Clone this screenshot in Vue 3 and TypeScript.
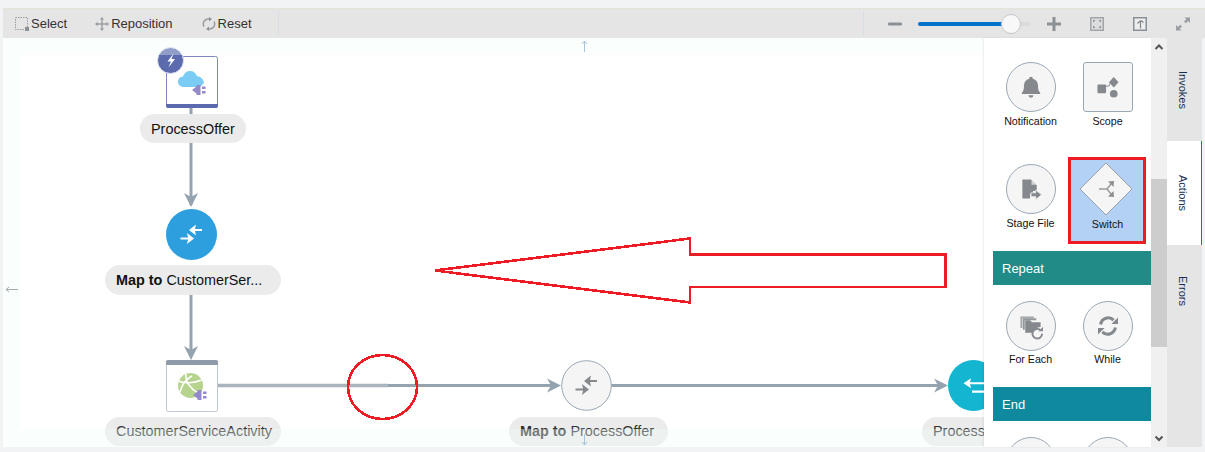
<template>
  <div class="page">
    <svg class="defs" aria-hidden="true">
      <symbol id="i-bell" viewBox="0 0 50 50">
        <g transform="translate(25 25) scale(.86) translate(-25 -26)" fill="#85898d">
          <path d="M25 13.5a2.2 2.2 0 0 1 2.2 2.4c4.2 1 6.3 4.2 6.3 8.6 0 3.8 .6 6.8 2.6 8.5v1.5H13.9V33c2-1.7 2.6-4.7 2.6-8.5 0-4.4 2.1-7.6 6.3-8.6a2.2 2.2 0 0 1 2.2-2.4z" />
          <path d="M22 36h6a3 3 0 0 1-6 0z" />
        </g>
      </symbol>
      <symbol id="i-scope" viewBox="0 0 50 50">
        <rect x="14" y="22.5" width="9" height="9" rx="1" fill="#85898d" />
        <path d="M23 24h3l2-4h3" fill="none" stroke="#85898d" />
        <path d="M31 14.5l5 5.5-5 5.500-5-5.500z" fill="#85898d" />
        <circle cx="31" cy="32" r="4" fill="#85898d" />
      </symbol>
      <symbol id="i-file" viewBox="0 0 50 50">
        <path d="M16 15h9l6 6v6h-4v3h-3v5H16z" fill="#85898d" />
        <path d="M25.5 15.500l5 5h-5z" fill="#d3d5d7" />
        <path d="M25 29h5v-3l6 5-6 5v-3h-5z" fill="#85898d" stroke="#f5f5f5" stroke-width=".8" />
      </symbol>
      <symbol id="i-foreach" viewBox="0 0 50 50">
        <path d="M14 15h14v2H16v10h-2z" fill="#a5a8ab" />
        <path d="M16.5 17h14v2h-12v10h-2z" fill="#95989b" />
        <path d="M19 19h5l2 2h9v5a9 9 0 0 0-8 6h-8z" fill="#85898d" />
        <path d="M36.500 33a5 5 0 1 1-2-4" fill="none" stroke="#85898d" stroke-width="2" />
        <path d="M32.500 30.500h5v-4.500z" fill="#85898d" />
      </symbol>
      <symbol id="i-while" viewBox="0 0 50 50">
        <g transform="translate(25 25) scale(.8) translate(-25 -25)">
          <path d="M15.5 23a9.800 9.800 0 0 1 16.800-5.600" fill="none" stroke="#85898d" stroke-width="4" />
          <path d="M29.5 22.500h8.500V14z" fill="#85898d" />
          <path d="M34.5 27a9.800 9.800 0 0 1-16.800 5.600" fill="none" stroke="#85898d" stroke-width="4" />
          <path d="M20.5 27.500H12V36z" fill="#85898d" />
        </g>
      </symbol>
      <symbol id="i-plug" viewBox="0 0 16 11">
        <path d="M.5 5.500L5 2V.5h4v10H5V9z" fill="#948acb" />
        <path d="M10.500 2h3.500v2.500h-3.500zM10.500 6.500h3.500V9h-3.500z" fill="#948acb" />
      </symbol>
    </svg>

    <header class="toolbar">
      <button v-for="tool in leftTools" :key="tool.label" class="tool">
        <svg class="tool-icon" viewBox="0 0 14 14" v-html="tool.icon" />
        <span>{{ tool.label }}</span>
      </button>
      <span class="divider" />
      <div class="zoom-controls">
        <span class="divider first" />
        <svg class="tool-icon" viewBox="0 0 14 14"><rect y="5.5" width="14" height="3" rx="1" fill="#8b9095" /></svg>
        <div class="slider">
          <div class="slider-fill" :style="{ width: `${zoomLevel}%` }" />
          <div class="slider-knob" :style="{ left: `${zoomLevel}%` }" />
        </div>
        <svg class="tool-icon" viewBox="0 0 14 14"><path d="M0 5.500h5.500V0h3v5.500H14v3H8.500V14h-3V8.500H0z" fill="#8b9095" /></svg>
        <svg class="tool-icon spaced" viewBox="0 0 14 14">
          <rect width="14" height="14" fill="#a3a7ab" />
          <rect x="1.5" y="1.5" width="11" height="11" fill="#dcdcdc" />
          <path d="M3 3h2.500L3 5.500zM11 3v2.500L8.500 3zM3 11V8.500L5.500 11zM11 11H8.500L11 8.500z" fill="#8b9095" />
        </svg>
        <svg class="tool-icon spaced" viewBox="0 0 14 14">
          <rect width="14" height="14" fill="#8b9095" />
          <rect x="1.5" y="1.5" width="11" height="11" fill="#eeeeee" />
          <path d="M7.500 11.500V4.500c0-1 1-1 3 1M7 4L4.500 6.500" fill="none" stroke="#7c8186" stroke-width="1.100" />
        </svg>
        <svg class="tool-icon spaced" viewBox="0 0 14 14">
          <path d="M8.500 0.500H14V6L12 4 9.800 6.200 8 4.500l2.300-2.200zM5.500 13.500H0V8l2 2 2.200-2.200L6 9.500 3.700 11.700z" fill="#9a9ea2" />
        </svg>
      </div>
    </header>

    <main class="workspace">
      <section class="canvas">
        <svg class="diagram" viewBox="3 38 981 409">
          <!-- connectors -->
          <path d="M191 108V205M191 295V356" class="edge" />
          <path d="M217 385.500H388" class="edge faded-edge" />
          <path d="M388 385.500H556M611 385.500H943" class="edge" />
          <path d="M184 193l7 14 7-14-7 4z" class="edge-head" />
          <path d="M184 346l7 14 7-14-7 4z" class="edge-head" />
          <path d="M547 378.500l14 7-14 7 4-7z" class="edge-head" />
          <path d="M934 378.500l14 7-14 7 4-7z" class="edge-head" />

          <!-- ProcessOffer -->
          <rect x="166.5" y="56.5" width="51" height="51" rx="2" fill="#fff" stroke="#7f86bf" />
          <path d="M166 104h52v2a2 2 0 0 1-2 2h-48a2 2 0 0 1-2-2z" fill="#5b69ae" />
          <path d="M184 87c-4 0-6-2.500-6-5.500s2-4.800 5-5c1-3.500 3.500-5.500 7-5.500 3.500 0 6 2 6.800 5 3 .2 6 2 7.200 6.500-1 1.500-2 3-4.500 4.500z" fill="#7accf4" />
          <use href="#i-plug" x="191.500" y="84.500" width="16" height="11" />
          <circle cx="170.5" cy="60.5" r="13" fill="#5c6bae" stroke="#e3e6f2" />
          <path d="M173.500 53.500l-6 8h3.500l-2.500 6 6.500-8.500h-3.500z" fill="#fff" />

          <!-- Map to CustomerService -->
          <circle cx="191.5" cy="234.5" r="25.5" fill="#2d9fdf" />
          <g transform="translate(191.5 234.5)" fill="#fff">
            <path d="M10.500-5.500H3.500l1-4.500-7 5.500 7 5.500-1-4.500H10.500z" />
            <path d="M-11 3H-3.500l-1-4.500 7 5.500-7 5.500 1-4.500H-11z" />
          </g>

          <!-- CustomerServiceActivity -->
          <rect x="166.5" y="360.5" width="51" height="51" rx="2" fill="#fff" stroke="#bec7d2" />
          <path d="M166 365v-3a2 2 0 0 1 2-2h48a2 2 0 0 1 2 2v3z" fill="#8f9ba9" />
          <circle cx="190.5" cy="385.5" r="12.5" fill="#b6d48d" />
          <path d="M180 392c2-8 6-13 12-16M186 374c-1 8 5 15 12 19M178.500 381c6 3 16 2 23-1" fill="none" stroke="#fff" stroke-width="1.500" />
          <use href="#i-plug" x="192.500" y="389.500" width="16" height="11" />

          <!-- Map to ProcessOffer -->
          <circle cx="586.5" cy="385.5" r="24.8" fill="#f5f5f5" stroke="#9aa8b5" />
          <g transform="translate(586.5 385.5)" fill="#85898d">
            <path d="M10.500-5.500H3.500l1-4.500-7 5.500 7 5.500-1-4.500H10.500z" />
            <path d="M-11 3H-3.500l-1-4.500 7 5.500-7 5.500 1-4.500H-11z" />
          </g>

          <!-- ProcessOffer return -->
          <circle cx="973.5" cy="385.5" r="25.5" fill="#14b5d1" />
          <path d="M984 382.200H970l1-4-7.500 5 7.500 5-1-4h14zM972 390.500H984V392.700H972z" fill="#fff" />
        </svg>

        <div
          v-for="pill in pills"
          :key="pill.x"
          class="pill"
          :class="{ dim: pill.dim }"
          :style="{ left: `${pill.x - 3}px`, top: `${pill.y - 38}px`, width: `${pill.width}px`, height: `${pill.height ?? 29}px` }"
        >
          <b v-if="pill.bold">{{ pill.bold }}&nbsp;</b>{{ pill.text }}
        </div>

        <div class="hint-band top" />
        <div class="hint-band left" />
        <div class="hint-band bottom" />

        <svg class="diagram" viewBox="3 38 981 409">
          <path d="M584.500 52V41M582 44l2.500-3 2.500 3" class="hint" stroke="#a9c3d9" />
          <path d="M18 289.500H6M9 287l-3 2.500 3 2.500" class="hint" stroke="#a5a9ac" />
          <path d="M584.500 434v11M582 442l2.500 3 2.500-3" class="hint" stroke="#a9c3d9" />
          <ellipse cx="382.5" cy="387" rx="34.5" ry="32" class="markup" />
          <path d="M435 270.500L690 238.500V254.500H945.500V287H690V302.500z" class="markup" />
        </svg>
      </section>

      <aside class="palette">
        <template v-for="(group, g) in palette" :key="g">
          <h3 v-if="group.title" class="group-title" :style="{ background: group.color }">{{ group.title }}</h3>
          <div class="group-grid" :class="{ intro: !group.title }">
            <div
              v-for="(item, i) in group.items"
              :key="i"
              class="palette-item"
              :class="{ selected: item.shape === 'diamond' }"
            >
              <svg v-if="item.shape === 'diamond'" class="palette-icon" viewBox="0 0 54 54">
                <path d="M27 1l26 26-26 26L1 27z" fill="#f5f5f5" stroke="#9aa0a8" />
                <path d="M20 27h8l4-5M28 27l4 5" fill="none" stroke="#9a9a9a" stroke-width="1.500" />
                <path d="M29 19.500l6-.5-.5 6zM29 34.500l6 .5-.5-6z" fill="#8d8d8d" />
              </svg>
              <div v-else class="palette-icon" :class="item.shape">
                <svg viewBox="0 0 50 50"><use v-if="item.icon" :href="`#${item.icon}`" /></svg>
              </div>
              <span v-if="item.label" class="palette-label">{{ item.label }}</span>
            </div>
          </div>
        </template>
      </aside>

      <div class="scrollbar">
        <svg class="scroll-btn" viewBox="0 0 16 18"><path d="M4.500 11L8 7.500 11.500 11" /></svg>
        <div class="scroll-thumb" />
        <svg class="scroll-btn end" viewBox="0 0 16 18"><path d="M4.500 7.500L8 11l3.500-3.500" /></svg>
      </div>

      <nav class="tabs">
        <div v-for="tab in tabs" :key="tab.label" class="tab" :class="{ active: tab.active }" :style="{ height: `${tab.height}px` }">
          <span>{{ tab.label }}</span>
        </div>
      </nav>
    </main>
  </div>
</template>

<script setup lang="ts">
interface PaletteItem {
  label?: string
  shape: 'circle' | 'square' | 'diamond'
  icon?: string
}

interface Pill {
  x: number
  y: number
  width: number
  height?: number
  bold?: string
  text: string
  dim?: boolean
}

const zoomLevel = 82

const leftTools = [
  {
    label: 'Select',
    icon: '<rect x=".5" y=".5" width="12" height="12" fill="none" stroke="#9a9ea2" stroke-dasharray="1.500 1" /><rect x="10" y="10" width="4" height="4" fill="#8b9095" />',
  },
  {
    label: 'Reposition',
    icon: '<path d="M7 0l2.200 2.500H7.700v3.800h3.800V4.800L14 7l-2.500 2.200V7.700H7.700v3.800h1.500L7 14l-2.200-2.500h1.500V7.700H2.500v1.500L0 7l2.500-2.200v1.500h3.800V2.500H4.800z" fill="#9a9ea2" />',
  },
  {
    label: 'Reset',
    icon: '<path d="M2 9.500A5 5 0 0 1 6 2h2M12 4.500A5 5 0 0 1 8 12H6" fill="none" stroke="#9a9ea2" stroke-width="1.500" /><path d="M7 0v4.500L10 2zM7 14V9.500L4 12z" fill="#8b9095" />',
  },
]

const pills: Pill[] = [
  { x: 140, y: 114, width: 106, text: 'ProcessOffer' },
  { x: 105, y: 265, width: 176, height: 30, bold: 'Map to', text: 'CustomerSer...' },
  { x: 105, y: 417, width: 176, text: 'CustomerServiceActivity', dim: true },
  { x: 509, y: 417, width: 159, bold: 'Map to', text: 'ProcessOffer', dim: true },
  { x: 922, y: 417, width: 120, text: 'ProcessOffer', dim: true },
]

const palette: { title?: string; color?: string; items: PaletteItem[] }[] = [
  {
    items: [
      { label: 'Notification', shape: 'circle', icon: 'i-bell' },
      { label: 'Scope', shape: 'square', icon: 'i-scope' },
      { label: 'Stage File', shape: 'circle', icon: 'i-file' },
      { label: 'Switch', shape: 'diamond' },
    ],
  },
  {
    title: 'Repeat',
    color: '#218b87',
    items: [
      { label: 'For Each', shape: 'circle', icon: 'i-foreach' },
      { label: 'While', shape: 'circle', icon: 'i-while' },
    ],
  },
  {
    title: 'End',
    color: '#0e899e',
    items: [{ shape: 'circle' }, { shape: 'circle' }],
  },
]

const tabs = [
  { label: 'Invokes', height: 103 },
  { label: 'Actions', height: 104, active: true },
  { label: 'Errors', height: 92 },
]
</script>

<style scoped>
.page {
  height: 452px;
  box-sizing: border-box;
  padding: 8px 0 0 3px;
  overflow: hidden;
  font-family: "Liberation Sans", Arial, sans-serif;
  color: #111;
}

.defs {
  position: absolute;
  width: 0;
  height: 0;
}

.toolbar {
  display: flex;
  align-items: center;
  height: 29px;
  padding-left: 12px;
  background: #e5e5e5;
  border-top: 1px solid #e3e4d8;
}

.tool {
  display: flex;
  align-items: center;
  gap: 2px;
  margin-right: 29px;
  padding: 0;
  border: 0;
  background: none;
  font: 13px "Liberation Sans", Arial, sans-serif;
  color: #333;
}

.tool:first-child {
  margin-right: 28px;
}

.tool-icon {
  width: 14px;
  height: 14px;
  flex: none;
}

.divider {
  width: 1px;
  height: 25px;
  margin-left: -3px;
  background: #d6dde4;
}

.divider.first {
  margin: 0 9px 0 0;
}

.zoom-controls {
  display: flex;
  align-items: center;
  gap: 15px;
  margin-left: auto;
  padding-right: 15px;
}

.spaced {
  margin-left: 14px;
}

.slider {
  position: relative;
  width: 113px;
  height: 4px;
  margin: 0 1px;
  border-radius: 2px;
  background: #d8dcdf;
}

.slider-fill {
  height: 100%;
  border-radius: 2px;
  background: #0572ce;
}

.slider-knob {
  position: absolute;
  top: -8px;
  width: 20px;
  height: 20px;
  margin-left: -10px;
  box-sizing: border-box;
  border: 1px solid #c4c8cb;
  border-radius: 50%;
  background: #f8f8f8;
}

.workspace {
  display: grid;
  grid-template-columns: 981px 167px 16px 35px;
  height: 409px;
}

.canvas {
  position: relative;
  overflow: hidden;
  background: #fff;
}

.diagram {
  position: absolute;
  inset: 0;
  width: 981px;
  height: 409px;
  pointer-events: none;
}

.edge {
  fill: none;
  stroke: #95a3b1;
  stroke-width: 3;
}

.faded-edge {
  stroke: #a9b4bf;
  stroke-width: 3.5;
}

.edge-head {
  fill: #95a3b1;
}

.pill {
  position: absolute;
  box-sizing: border-box;
  padding-left: 11px;
  border-radius: 15px;
  background: #ebebeb;
  font-size: 14.4px;
  line-height: 30px;
  white-space: nowrap;
  overflow: hidden;
}

.pill.dim {
  color: #333;
  line-height: 28px;
}

.hint-band {
  position: absolute;
  background: rgba(240, 255, 253, 0.35);
}

.hint-band.top {
  top: 0;
  left: 0;
  right: 0;
  height: 17px;
}

.hint-band.left {
  top: 17px;
  bottom: 18px;
  left: 0;
  width: 17px;
}

.hint-band.bottom {
  bottom: 0;
  left: 0;
  right: 0;
  height: 18px;
}

.hint {
  fill: none;
  stroke-width: 1;
}

.markup {
  fill: none;
  stroke: #ed1c24;
  stroke-width: 2.6;
  shape-rendering: crispEdges;
}

.palette {
  position: relative;
  z-index: 1;
  overflow: hidden;
  padding: 24px 0 0 9px;
  background: #fff;
  box-shadow: -1px 0 2px rgba(0, 0, 0, 0.08);
}

.group-title {
  height: 34px;
  margin: 0;
  padding-left: 9px;
  font-size: 13px;
  font-weight: 400;
  line-height: 36px;
  color: #fff;
}

.group-grid {
  display: grid;
  grid-template-columns: 77px 77px;
  row-gap: 36px;
  margin-left: -1px;
  padding: 16px 0 20px;
}

.group-grid:not(.intro) .palette-label {
  margin-top: 1px;
}

.group-grid.intro {
  padding: 0 0 21px;
}

.palette-item {
  position: relative;
  isolation: isolate;
  display: flex;
  flex-direction: column;
  align-items: center;
  height: 66px;
}

.palette-item.selected::before {
  content: "";
  position: absolute;
  z-index: -1;
  inset: -7px 0 -14px -1px;
  border: 3px solid #ed1c24;
  background: #b3d1f5;
}

.palette-icon {
  width: 50px;
  height: 50px;
  flex: none;
  box-sizing: border-box;
  background: #f5f5f5;
  border: 1px solid #9aa8b5;
}

.palette-icon svg {
  display: block;
  width: 48px;
  height: 48px;
}

.palette-icon.circle {
  border-radius: 50%;
}

.palette-icon.square {
  border-radius: 3px;
}

.selected svg.palette-icon {
  width: 54px;
  height: 54px;
  margin: -2px 3px 0 0;
  background: none;
  border: 0;
}

.palette-label {
  margin-top: 2px;
  font-size: 10.67px;
  line-height: 14px;
  white-space: nowrap;
}

.selected .palette-label {
  margin-top: 1px;
}

.scrollbar {
  display: flex;
  flex-direction: column;
  background: #f0f0f0;
}

.scroll-btn {
  width: 16px;
  height: 18px;
  flex: none;
  fill: none;
  stroke: #555;
  stroke-width: 2;
}

.scroll-btn.end {
  margin-top: auto;
}

.scroll-thumb {
  height: 168px;
  margin-top: 123px;
  background: #cdcdcd;
}

.tabs {
  background: #e5e5e5;
  font-size: 11px;
  color: #16304f;
}

.tab {
  display: flex;
  align-items: center;
  justify-content: center;
  box-sizing: border-box;
  width: 100%;
  padding-right: 4px;
  writing-mode: vertical-rl;
}

.tab.active {
  background: #fff;
  border-right: 1px solid #1a6dc0;
  padding-right: 3px;
}
</style>

<style>
body {
  background: #f1f3f5;
}
</style>
